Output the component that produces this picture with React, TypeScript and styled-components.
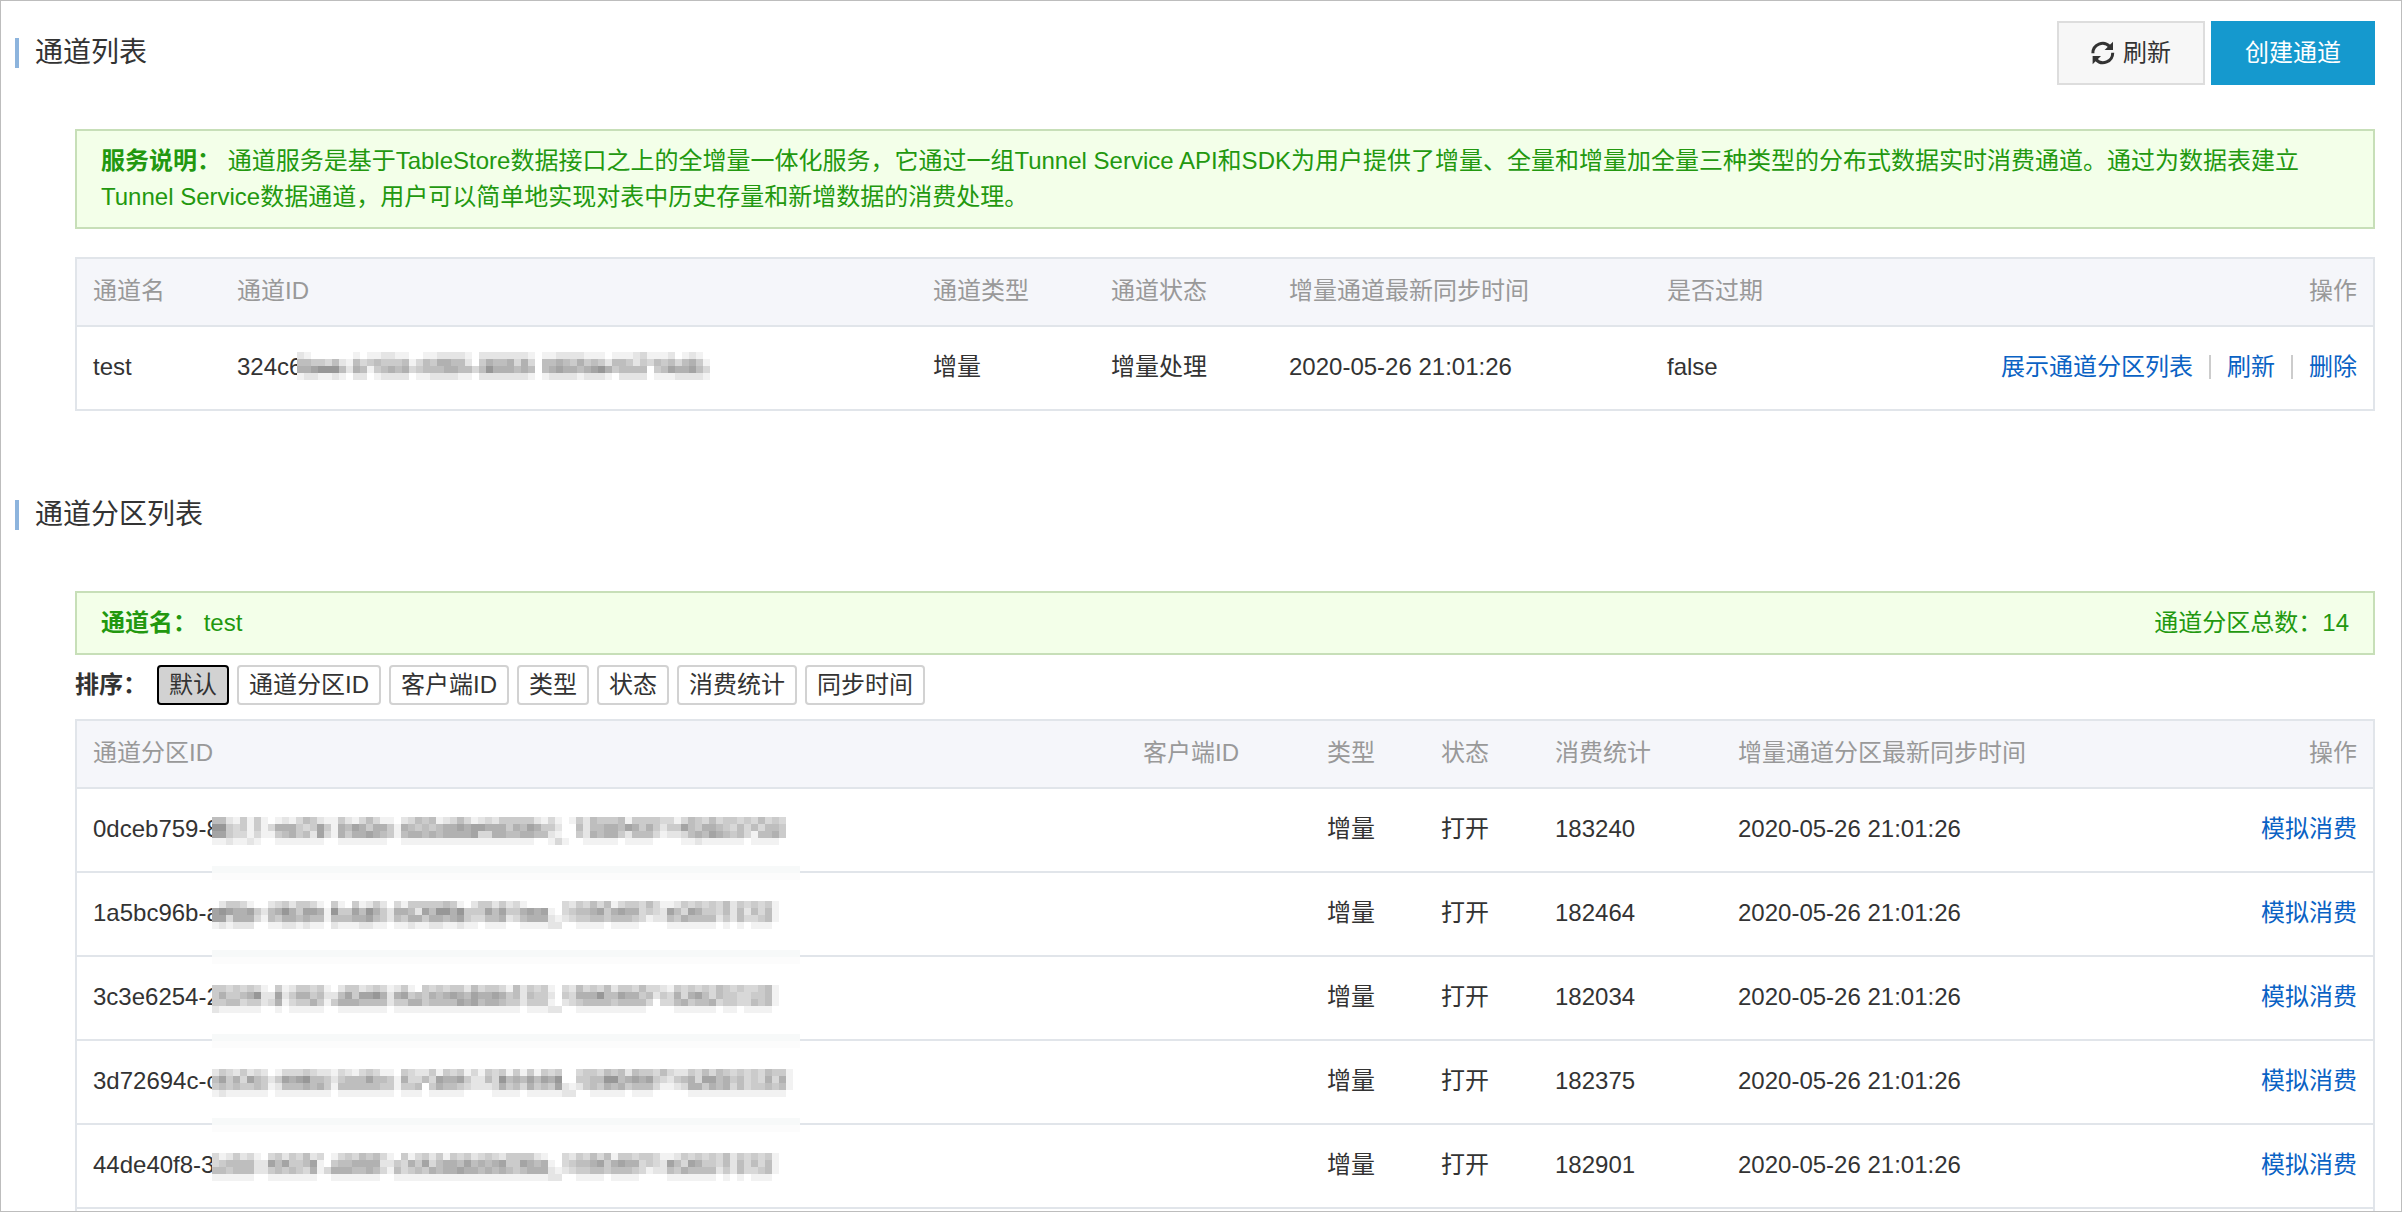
import React from 'react';
import styled, { createGlobalStyle } from 'styled-components';

const GlobalStyle = createGlobalStyle`
  *, *::before, *::after { box-sizing: border-box; }
  body {
    margin: 0;
    background: #fff;
    color: #333;
    font-family: "Liberation Sans", "Noto Sans CJK SC", sans-serif;
    font-size: 24px;
    line-height: 36px;
  }
  button { font: inherit; color: inherit; cursor: pointer; }
`;

const Page = styled.main`
  display: flex;
  flex-direction: column;
  gap: 72px;
  height: 100vh;
  overflow: hidden;
  padding: 20px 26px 0 14px;
  border: 1px solid #bdbdbd;
`;

const Section = styled.section<{ $grow?: boolean }>`
  display: flex;
  flex-direction: column;
  gap: 44px;
  flex: ${(p) => (p.$grow ? '1 0 auto' : '0 0 auto')};
`;

const SectionHeader = styled.header`
  display: flex;
  align-items: center;
  justify-content: space-between;
  min-height: 64px;
`;

const Title = styled.h2`
  margin: 0;
  padding-left: 16px;
  border-left: 4px solid #8db4dd;
  font-size: 28px;
  font-weight: 400;
  line-height: 30px;
`;

const Actions = styled.div`
  display: flex;
  gap: 6px;
`;

const ActionButton = styled.button<{ $primary?: boolean }>`
  display: flex;
  align-items: center;
  gap: 8px;
  height: 64px;
  padding: 0 32px;
  border: 2px solid ${(p) => (p.$primary ? '#1599ce' : '#ddd')};
  background: ${(p) => (p.$primary ? '#1599ce' : '#f7f7f7')};
  color: ${(p) => (p.$primary ? '#fff' : '#333')};
`;

const SectionBody = styled.div`
  display: flex;
  flex-direction: column;
  flex: 1 0 auto;
  padding-left: 60px;
`;

const Notice = styled.div`
  display: flex;
  justify-content: space-between;
  padding: 12px 24px;
  border: 2px solid #c7dfb8;
  background: #f3ffe9;
  color: #22980f;
`;

const NoticeText = styled.p`
  margin: 0;
`;

const SortBar = styled.div`
  display: flex;
  align-items: center;
  gap: 8px;
  padding: 10px 0 14px;
`;

const SortLabel = styled.strong`
  width: 74px;
`;

const SortButton = styled.button<{ $active?: boolean }>`
  height: 40px;
  padding: 0 10px;
  border: 2px solid ${(p) => (p.$active ? '#000' : '#d2d2d2')};
  border-radius: 4px;
  background: ${(p) => (p.$active ? '#d2d2d2' : '#fff')};
  line-height: 34px;
`;

const TableFrame = styled.div<{ $spaced?: boolean; $grow?: boolean }>`
  flex: ${(p) => (p.$grow ? '1 0 auto' : '0 0 auto')};
  margin-top: ${(p) => (p.$spaced ? '28px' : '0')};
  border: 2px solid #e1e5ea;
  border-bottom: 0;
`;

const Table = styled.table`
  width: 100%;
  table-layout: fixed;
  border-collapse: separate;
  border-spacing: 0;
`;

const Col = styled.col<{ $share: number }>`
  width: ${(p) => p.$share}%;
`;

const HeadCell = styled.th<{ $end?: boolean }>`
  height: 68px;
  padding: 0 16px 2px;
  border-bottom: 2px solid #e1e5ea;
  background: #f5f6fa;
  color: #999;
  font-weight: 400;
  text-align: ${(p) => (p.$end ? 'right' : 'left')};
`;

const Cell = styled.td<{ $end?: boolean }>`
  position: relative;
  height: 84px;
  padding: 0 16px 2px;
  border-bottom: 2px solid #e1e5ea;
  text-align: ${(p) => (p.$end ? 'right' : 'left')};
  white-space: nowrap;
`;

const Links = styled.div`
  display: flex;
  align-items: center;
  justify-content: flex-end;
  gap: 16px;
`;

const Link = styled.a`
  color: #0a62c4;
  text-decoration: none;
`;

const Divider = styled.span`
  width: 2px;
  height: 24px;
  background: #ccc;
`;

const MosaicLayer = styled.svg<{ $left: number; $top: number }>`
  position: absolute;
  left: ${(p) => p.$left}px;
  top: ${(p) => p.$top}px;
  background: #fff;
`;

const MosaicBand = styled.span`
  position: absolute;
  z-index: 1;
  left: 135px;
  bottom: -9px;
  width: 588px;
  height: 14px;
  border-top: 7px solid #f7f9f9;
  background: #fcfcfc;
`;

const BLOCK = 7;

/* Each digit is the darkness of one block, 0 being white. */
function Mosaic({ rows, left, top }: { rows: string[]; left: number; top: number }) {
  const width = Math.max(...rows.map((r) => r.length)) * BLOCK;
  return (
    <MosaicLayer
      $left={left}
      $top={top}
      width={width}
      height={rows.length * BLOCK}
      shapeRendering="crispEdges"
      aria-hidden="true"
    >
      {rows.flatMap((row, y) =>
        row.split('').map((digit, x) => {
          const level = Number(digit);
          if (!level) return null;
          const grey = 255 - level * 13;
          return (
            <rect
              key={`${x}-${y}`}
              x={x * BLOCK}
              y={y * BLOCK}
              width={BLOCK}
              height={BLOCK}
              fill={`rgb(${grey},${grey},${grey})`}
            />
          );
        })
      )}
    </MosaicLayer>
  );
}

function RefreshIcon() {
  return (
    <svg width="24" height="24" viewBox="0 0 24 24" aria-hidden="true">
      <path d="M1.9 12.2A9.7 9.7 0 0 1 18.6 5.4" fill="none" stroke="#333" strokeWidth="3" />
      <path d="M22 .8V9h-8.4z" fill="#333" />
      <path d="M21.7 11.8A9.7 9.7 0 0 1 5 18.6" fill="none" stroke="#333" strokeWidth="3" />
      <path d="M1.6 23.2V15H10z" fill="#333" />
    </svg>
  );
}

type Column = { label: string; weight: number };

const tunnelColumns: Column[] = [
  { label: '通道名', weight: 144 },
  { label: '通道ID', weight: 696 },
  { label: '通道类型', weight: 178 },
  { label: '通道状态', weight: 178 },
  { label: '增量通道最新同步时间', weight: 378 },
  { label: '是否过期', weight: 300 },
  { label: '操作', weight: 422 },
];

const channelColumns: Column[] = [
  { label: '通道分区ID', weight: 1050 },
  { label: '客户端ID', weight: 184 },
  { label: '类型', weight: 114 },
  { label: '状态', weight: 114 },
  { label: '消费统计', weight: 183 },
  { label: '增量通道分区最新同步时间', weight: 401 },
  { label: '操作', weight: 250 },
];

const tunnelMosaic = [
  '21000000101122110011222210222222210112222111011123111201210',
  '55443521534544451354665520465563630556546454255424354535641',
  '66788852651456563455566553586665650567665678645555045766753',
  '12211210220122220112222110222222210122221222102222011122221',
];

const channels = [
  {
    id: '0dceb759-8',
    count: 183240,
    mosaic: [
      '55214141012135421142135311023545123531232444442131014254445144443313543534434353430',
      '88434141366643474165764664165454566767766646576442005255665764642447546654353535540',
      '77433131145645273164667654156656566667336655665521004265664255531223565765453155640',
      '11211210011111110011111110011111111111111111110013100111110111100001121111110111100',
    ],
  },
  {
    id: '1a5bc96b-a',
    count: 182464,
    mosaic: [
      '024431002342443104104124203144444541024424231000003243535134435311243434352434341',
      '787667425686477618447586426652758868444757446767103455674676634327537644352525351',
      '773666315466565515556675425466466567433556235666212344554555431225465555242533451',
      '121222001122121102111221101121122112110111001111220011110111100001111111010101110',
    ],
  },
  {
    id: '3c3e6254-2',
    count: 182034,
    mosaic: [
      '443434310412443410244234312410434344253443152434103253435244353321434343543433451',
      '464456822724664522574778626745465676576676452544204366685576645243636753544334451',
      '445534423613446414666555524466455557675665442444102345555455553033564556344335451',
      '211111100101111100111111101111111111111111110111220011111111110000111111011011110',
    ],
  },
  {
    id: '3d72694c-c',
    count: 182375,
    mosaic: [
      '24324232013334322132134311043224143413143414141434003443545254435322435354343435441',
      '57463754247678554245557554163353766742253856575768004455885676743245637756453436361',
      '45454454125556564155555544144504655432223645364547212454656455531123664656353445451',
      '12111111011111111011111111011101111100001111011111220011111011100000111111111111110',
    ],
  },
  {
    id: '44de40f8-3',
    count: 182901,
    mosaic: [
      '312423103424352301343545310413424143423432444421003243535144344311243434352434341',
      '345555227574457104556666224364735665756567447656103455674676634327537644352535351',
      '554555224545436136665565315345465667665656545666212344554555431225465555242533451',
      '111111001111111001111111001111111111111111111111220011110111100001111111010101110',
    ],
  },
];

const sortOptions = ['默认', '通道分区ID', '客户端ID', '类型', '状态', '消费统计', '同步时间'];

function TableHead({ columns }: { columns: Column[] }) {
  const total = columns.reduce((sum, c) => sum + c.weight, 0);
  return (
    <>
      <colgroup>
        {columns.map((c) => (
          <Col key={c.label} $share={(c.weight / total) * 100} />
        ))}
      </colgroup>
      <thead>
        <tr>
          {columns.map((c, i) => (
            <HeadCell key={c.label} scope="col" $end={i === columns.length - 1}>
              {c.label}
            </HeadCell>
          ))}
        </tr>
      </thead>
    </>
  );
}

export default function App() {
  return (
    <>
      <GlobalStyle />
      <Page>
        <Section>
          <SectionHeader>
            <Title>通道列表</Title>
            <Actions>
              <ActionButton type="button">
                <RefreshIcon />
                刷新
              </ActionButton>
              <ActionButton type="button" $primary>
                创建通道
              </ActionButton>
            </Actions>
          </SectionHeader>
          <SectionBody>
            <Notice>
              <NoticeText>
                <strong>服务说明：</strong>{' '}
                通道服务是基于TableStore数据接口之上的全增量一体化服务，它通过一组Tunnel Service
                API和SDK为用户提供了增量、全量和增量加全量三种类型的分布式数据实时消费通道。通过为数据表建立Tunnel
                Service数据通道，用户可以简单地实现对表中历史存量和新增数据的消费处理。
              </NoticeText>
            </Notice>
            <TableFrame $spaced>
              <Table>
                <TableHead columns={tunnelColumns} />
                <tbody>
                  <tr>
                    <Cell>test</Cell>
                    <Cell>
                      324c6
                      <Mosaic rows={tunnelMosaic} left={76} top={25} />
                    </Cell>
                    <Cell>增量</Cell>
                    <Cell>增量处理</Cell>
                    <Cell>2020-05-26 21:01:26</Cell>
                    <Cell>false</Cell>
                    <Cell $end>
                      <Links>
                        <Link href="#channels">展示通道分区列表</Link>
                        <Divider />
                        <Link href="#refresh">刷新</Link>
                        <Divider />
                        <Link href="#delete">删除</Link>
                      </Links>
                    </Cell>
                  </tr>
                </tbody>
              </Table>
            </TableFrame>
          </SectionBody>
        </Section>

        <Section $grow id="channels">
          <SectionHeader>
            <Title>通道分区列表</Title>
          </SectionHeader>
          <SectionBody>
            <Notice>
              <NoticeText>
                <strong>通道名：</strong> test
              </NoticeText>
              <NoticeText>通道分区总数：14</NoticeText>
            </Notice>
            <SortBar>
              <SortLabel>排序：</SortLabel>
              {sortOptions.map((label, i) => (
                <SortButton key={label} type="button" $active={i === 0} aria-pressed={i === 0}>
                  {label}
                </SortButton>
              ))}
            </SortBar>
            <TableFrame $grow>
              <Table>
                <TableHead columns={channelColumns} />
                <tbody>
                  {channels.map((channel, i) => (
                    <tr key={channel.id}>
                      <Cell>
                        {channel.id}
                        <Mosaic rows={channel.mosaic} left={135} top={28} />
                        {i < channels.length - 1 && <MosaicBand />}
                      </Cell>
                      <Cell />
                      <Cell>增量</Cell>
                      <Cell>打开</Cell>
                      <Cell>{channel.count}</Cell>
                      <Cell>2020-05-26 21:01:26</Cell>
                      <Cell $end>
                        <Link href="#simulate">模拟消费</Link>
                      </Cell>
                    </tr>
                  ))}
                </tbody>
              </Table>
            </TableFrame>
          </SectionBody>
        </Section>
      </Page>
    </>
  );
}
